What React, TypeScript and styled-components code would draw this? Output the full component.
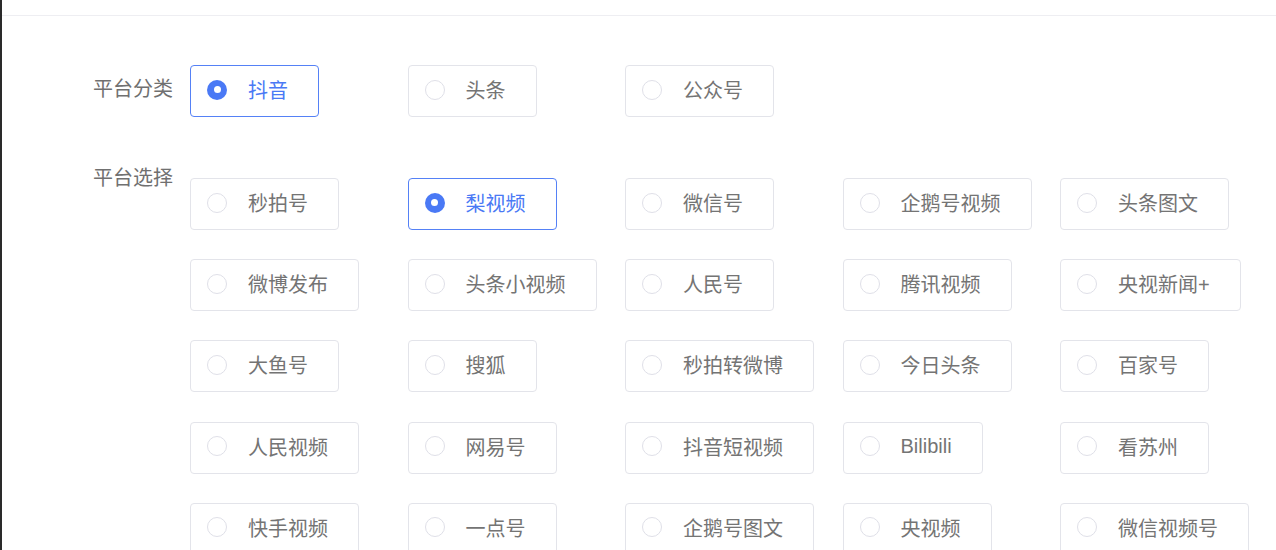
import React, { FunctionComponent, useState } from 'react';
import styled, { createGlobalStyle } from 'styled-components';

const GlobalStyle = createGlobalStyle`
    html, body {
        margin: 0;
        padding: 0;
        background: #fff;
    }

    body {
        font-family: "Liberation Sans", "Noto Sans CJK SC", sans-serif;
    }
`;

const StyledPage = styled.div`
    width: 1276px;
    height: 550px;
    box-sizing: border-box;
    border-left: 2px solid #2a2a2a;
    overflow: hidden;
    background: #fff;
`;

const StyledHeader = styled.div`
    height: 15px;
    border-bottom: 1px solid #eeeef2;
`;

const StyledForm = styled.div`
    padding: 49px 0 0 91px;
    display: flex;
    flex-direction: column;
    gap: 49px;
`;

const StyledFormItem = styled.div`
    display: flex;
    align-items: flex-start;
`;

const StyledLabel = styled.div<{ $lineHeight: number }>`
    width: 81px;
    padding-right: 17px;
    text-align: right;
    font-size: 20px;
    line-height: ${({ $lineHeight }) => $lineHeight}px;
    color: #707070;
    white-space: nowrap;
`;

const StyledGroup = styled.div<{ $offset: number }>`
    display: grid;
    grid-template-columns: repeat(5, 217.5px);
    row-gap: 29.2px;
    justify-items: start;
    margin-top: ${({ $offset }) => $offset}px;
`;

const StyledOption = styled.label<{ $checked: boolean }>`
    display: flex;
    align-items: center;
    height: 52px;
    box-sizing: border-box;
    padding: 0 30px 3px 16px;
    border: 1px solid ${({ $checked }) => ($checked ? '#5581f6' : '#e3e4ea')};
    border-radius: 4px;
    cursor: pointer;
    font-size: 20px;
    color: ${({ $checked }) => ($checked ? '#4a79f5' : '#747474')};
    white-space: nowrap;
`;

const StyledDot = styled.span<{ $checked: boolean }>`
    width: 20px;
    height: 20px;
    box-sizing: border-box;
    border-radius: 50%;
    margin-right: 21px;
    flex-shrink: 0;
    background: ${({ $checked }) => ($checked ? '#4a79f5' : '#fff')};
    border: ${({ $checked }) => ($checked ? 'none' : '1px solid #dfe0e8')};
    display: flex;
    align-items: center;
    justify-content: center;

    &::after {
        content: '';
        width: 7px;
        height: 7px;
        border-radius: 50%;
        background: #fff;
        display: ${({ $checked }) => ($checked ? 'block' : 'none')};
    }
`;

const CATEGORIES = ['抖音', '头条', '公众号'];

const PLATFORMS = [
    '秒拍号', '梨视频', '微信号', '企鹅号视频', '头条图文',
    '微博发布', '头条小视频', '人民号', '腾讯视频', '央视新闻+',
    '大鱼号', '搜狐', '秒拍转微博', '今日头条', '百家号',
    '人民视频', '网易号', '抖音短视频', 'Bilibili', '看苏州',
    '快手视频', '一点号', '企鹅号图文', '央视频', '微信视频号'
];

interface IRadioGroup {
    readonly options: string[];
    readonly value: string;
    readonly offset: number;
    readonly onChange: (value: string) => void;
}

const RadioGroup: FunctionComponent<IRadioGroup> = ({ options, value, offset, onChange }) => (
    <StyledGroup $offset={offset}>
        {
            options.map((option) => {
                const checked = option === value;

                return (
                    <StyledOption
                        key={option}
                        $checked={checked}
                        onClick={() => onChange(option)}
                    >
                        <StyledDot $checked={checked} />
                        {option}
                    </StyledOption>
                );
            })
        }
    </StyledGroup>
);

const App: FunctionComponent = () => {
    const [category, setCategory] = useState('抖音');
    const [platform, setPlatform] = useState('梨视频');

    return (
        <StyledPage>
            <GlobalStyle />
            <StyledHeader />
            <StyledForm>
                <StyledFormItem>
                    <StyledLabel $lineHeight={48}>平台分类</StyledLabel>
                    <RadioGroup
                        options={CATEGORIES}
                        value={category}
                        offset={0}
                        onChange={setCategory}
                    />
                </StyledFormItem>
                <StyledFormItem>
                    <StyledLabel $lineHeight={24}>平台选择</StyledLabel>
                    <RadioGroup
                        options={PLATFORMS}
                        value={platform}
                        offset={12}
                        onChange={setPlatform}
                    />
                </StyledFormItem>
            </StyledForm>
        </StyledPage>
    );
};

export default App;
